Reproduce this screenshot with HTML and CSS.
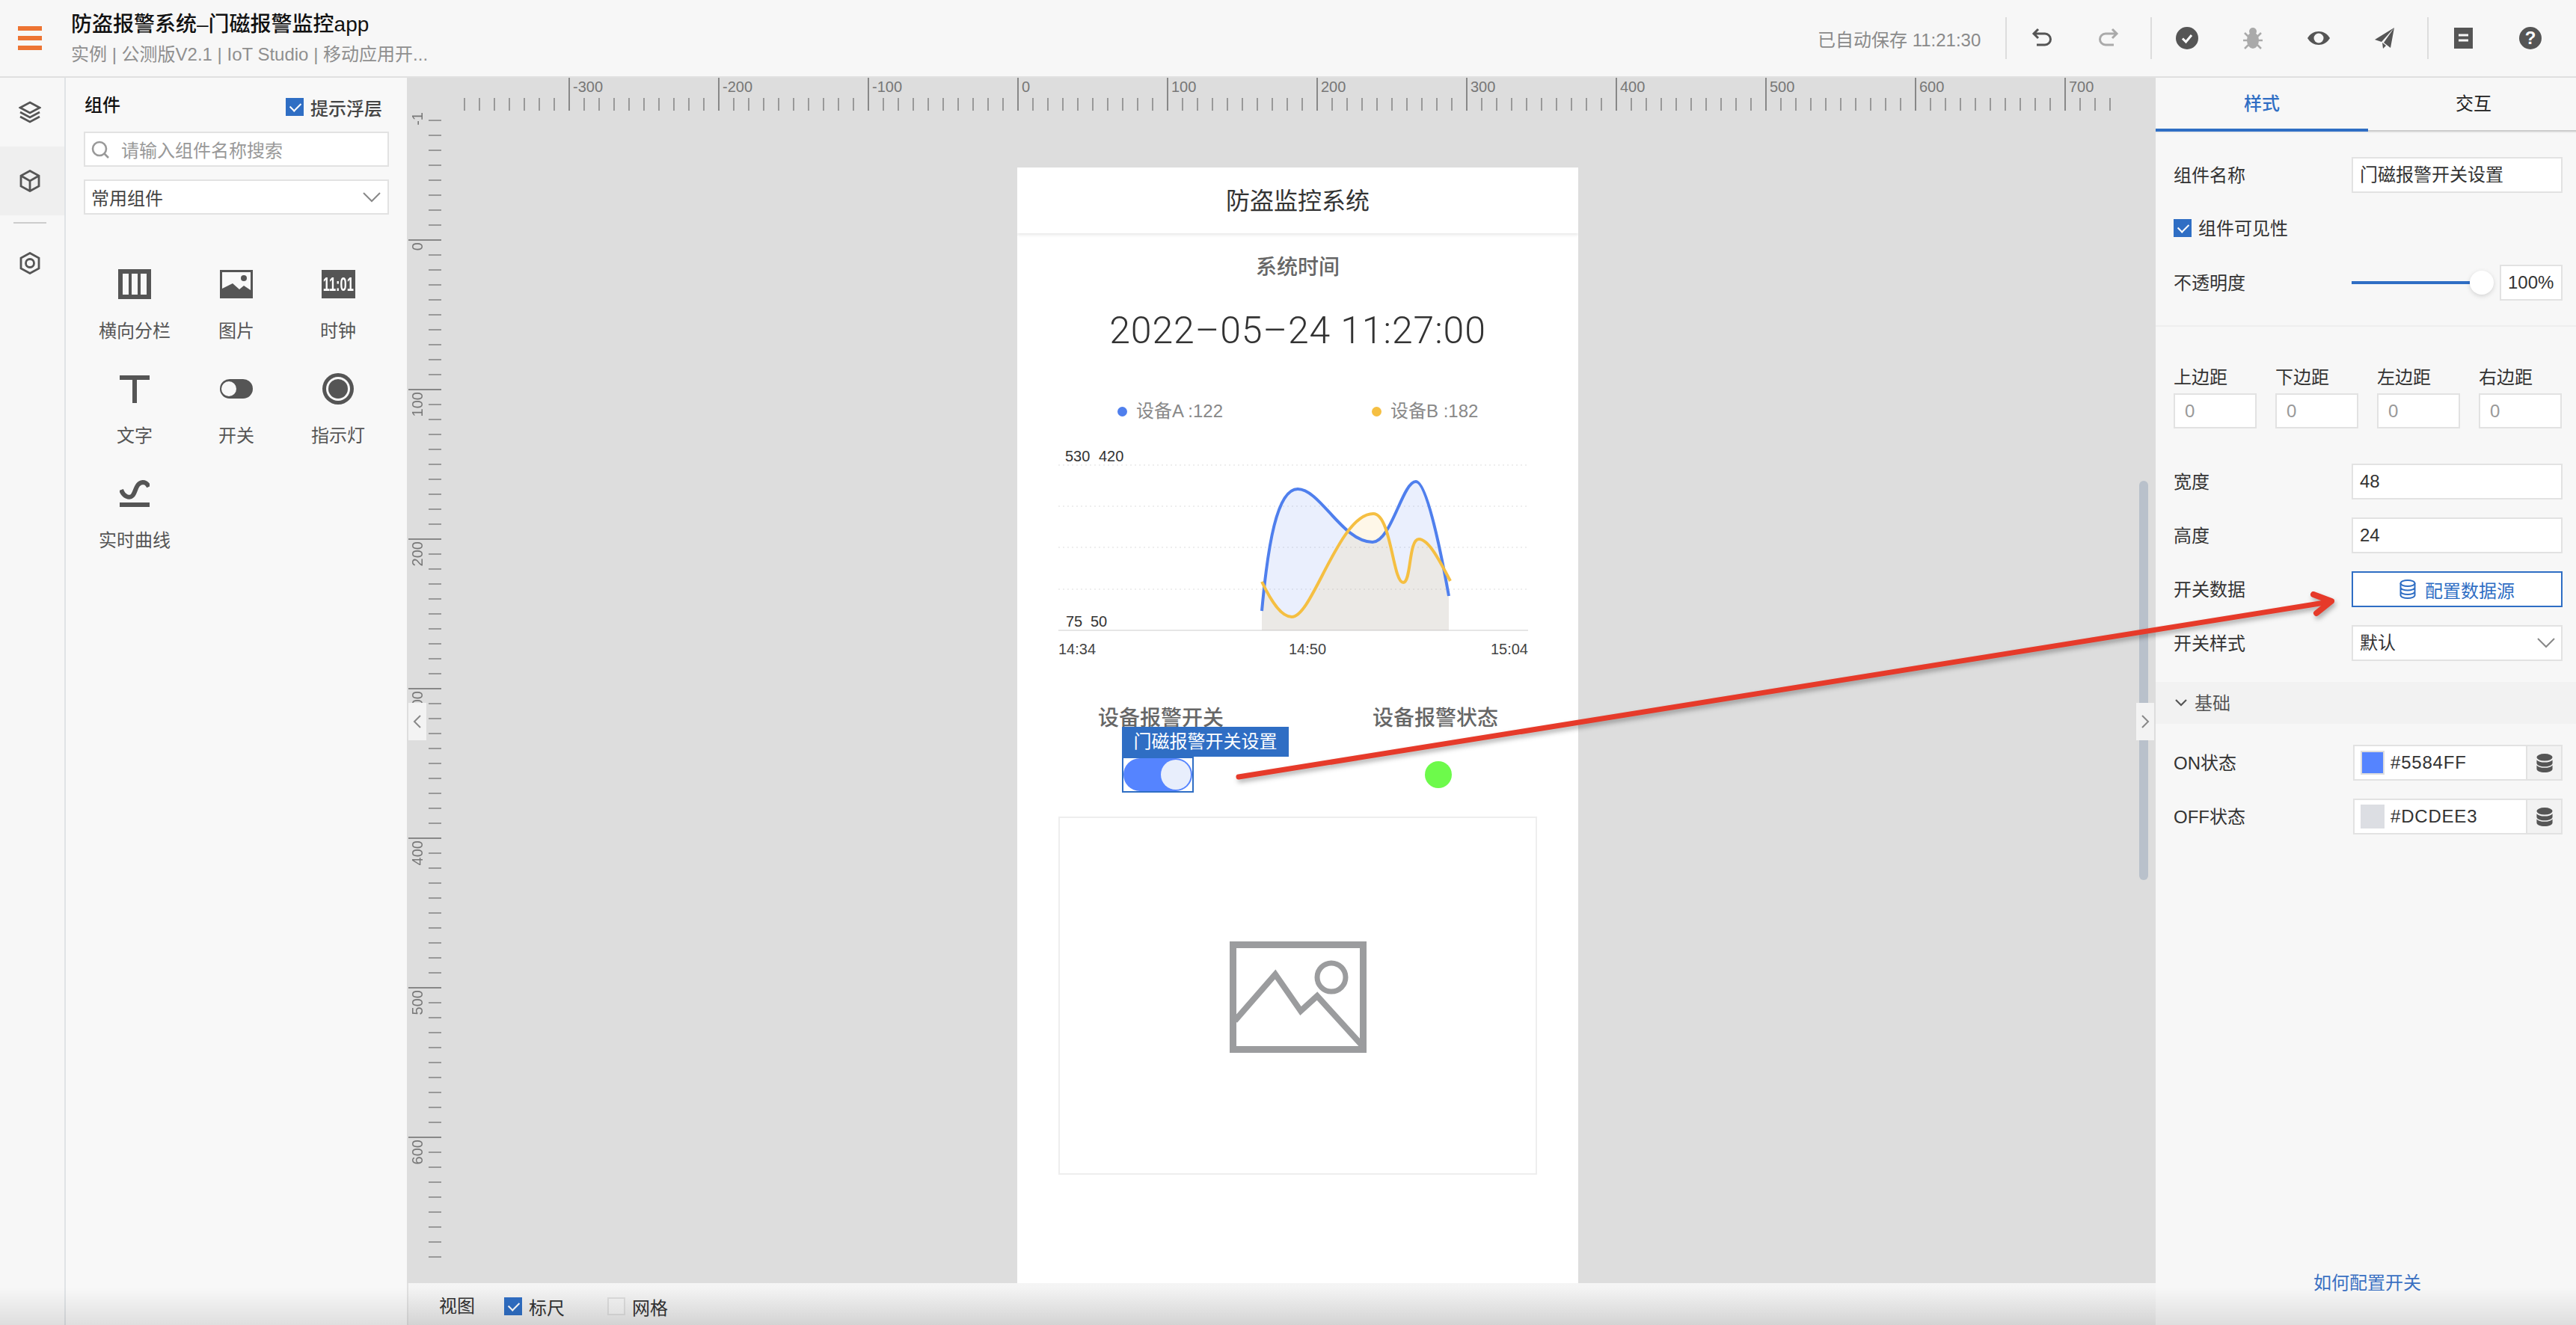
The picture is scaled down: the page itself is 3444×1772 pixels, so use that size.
FILE: index.html
```html
<!doctype html>
<html lang="zh-CN">
<head>
  <meta charset="utf-8">
  <title>防盗报警系统-门磁报警监控app</title>
  <link rel="stylesheet" href="styles.css">
</head>
<body>
<div class="app">
  <header class="topbar">
    <div class="burger"><span></span><span></span><span></span></div>
    <div class="project">
      <div class="project-name">防盗报警系统–门磁报警监控app</div>
      <div class="project-path">实例 | 公测版V2.1 | IoT Studio | 移动应用开...</div>
    </div>
    <div class="saved">已自动保存 11:21:30</div>
    <div class="tool-group tools-history">
      <svg class="tool" viewBox="0 0 30 30"><path d="M11 3 L5 9 L11 15 M5 9 H20 a7.500 7.500 0 0 1 0 15 H9" fill="none" stroke="#555" stroke-width="3"/></svg>
      <svg class="tool" viewBox="0 0 30 30"><path d="M19 3 L25 9 L19 15 M25 9 H10 a7.500 7.500 0 0 0 0 15 H21" fill="none" stroke="#aaa" stroke-width="3"/></svg>
    </div>
    <div class="tool-group tools-run">
      <svg class="tool" viewBox="0 0 30 30"><circle cx="15" cy="15" r="15" fill="#555"/><path d="M9 15.500 L13.500 20 L21 11" fill="none" stroke="#fff" stroke-width="3"/></svg>
      <svg class="tool" viewBox="0 0 30 30"><g fill="#aaa"><ellipse cx="15" cy="18" rx="8" ry="11"/><circle cx="15" cy="6" r="5"/></g><path d="M4 8 L9 13 M26 8 L21 13 M2 18 H8 M28 18 H22 M4 29 L9 24 M26 29 L21 24" stroke="#aaa" stroke-width="2.500"/></svg>
      <svg class="tool" viewBox="0 0 30 30"><path d="M0 15 C7 3 23 3 30 15 C23 27 7 27 0 15Z" fill="#555"/><circle cx="15" cy="15" r="6.500" fill="#f7f7f7"/></svg>
      <svg class="tool" viewBox="0 0 30 30"><path d="M28 1 L2 17 L11 20 Z M28 1 L14 21 L23 28 Z M12 21 L13 29 L17 25 Z" fill="#555"/></svg>
    </div>
    <div class="tool-group tools-help">
      <svg class="tool" viewBox="0 0 30 30"><rect x="3" y="1" width="25" height="28" fill="#555"/><path d="M9 11 H22 M9 18 H22" stroke="#f7f7f7" stroke-width="3"/></svg>
      <svg class="tool" viewBox="0 0 30 30"><circle cx="15" cy="15" r="15" fill="#555"/><text x="15" y="23" class="help-mark">?</text></svg>
    </div>
  </header>

  <div class="workspace">
    <nav class="rail">
      <div class="rail-item">
        <svg viewBox="0 0 30 30" class="rail-icon"><path d="M15 2 L28 9 L15 16 L2 9 Z M2 15 L15 22 L28 15 M2 21 L15 28 L28 21" fill="none" stroke="#555" stroke-width="2.600"/></svg>
      </div>
      <div class="rail-item rail-item-active">
        <svg viewBox="0 0 30 30" class="rail-icon"><path d="M15 1.500 L27 8 V22 L15 28.500 L3 22 V8 Z M3 8 L15 15 L27 8 M15 15 V28" fill="none" stroke="#555" stroke-width="2.800"/></svg>
      </div>
      <div class="rail-divider"></div>
      <div class="rail-item">
        <svg viewBox="0 0 30 30" class="rail-icon"><path d="M15 1.500 L27 8 V22 L15 28.500 L3 22 V8 Z" fill="none" stroke="#555" stroke-width="2.800"/><circle cx="15" cy="15" r="5.500" fill="none" stroke="#555" stroke-width="2.800"/></svg>
      </div>
    </nav>

    <aside class="library">
      <div class="library-head">
        <h2 class="library-title">组件</h2>
        <label class="hint-toggle"><span class="check"></span>提示浮层</label>
      </div>
      <div class="search">
        <svg viewBox="0 0 24 24" class="search-icon"><circle cx="11" cy="11" r="9" fill="none" stroke="#999" stroke-width="2.600"/><path d="M17 17 L23 23" stroke="#999" stroke-width="2.600"/></svg>
        <span>请输入组件名称搜索</span>
      </div>
      <div class="picker">
        <span>常用组件</span>
        <svg viewBox="0 0 24 14" class="chevron-down"><path d="M1 1 L12 12 L23 1" fill="none" stroke="#888" stroke-width="2"/></svg>
      </div>
      <div class="comp-grid">
        <div class="comp">
          <div class="comp-icon"><svg width="44" height="40" viewBox="0 0 44 40"><rect width="44" height="40" fill="#555"/><path d="M6 6h8v28H6z M18 6h8v28h-8z M30 6h8v28h-8z" fill="#f8f8f8"/></svg></div>
          <div class="comp-name">横向分栏</div>
        </div>
        <div class="comp">
          <div class="comp-icon"><svg width="44" height="38" viewBox="0 0 44 38"><rect width="44" height="38" fill="#555"/><path d="M3 3h38v24l-9-6-6 5-9-8L3 25z" fill="#f8f8f8"/><circle cx="32" cy="11" r="4" fill="#555"/></svg></div>
          <div class="comp-name">图片</div>
        </div>
        <div class="comp">
          <div class="comp-icon"><div class="clock-face"><span>11:01</span></div></div>
          <div class="comp-name">时钟</div>
        </div>
        <div class="comp">
          <div class="comp-icon"><svg width="40" height="37" viewBox="0 0 40 37"><path d="M0 0h40v6H23v31h-6V6H0z" fill="#555"/></svg></div>
          <div class="comp-name">文字</div>
        </div>
        <div class="comp">
          <div class="comp-icon"><svg width="44" height="26" viewBox="0 0 44 26"><rect width="44" height="26" rx="13" fill="#555"/><circle cx="12" cy="13" r="10" fill="#f8f8f8"/></svg></div>
          <div class="comp-name">开关</div>
        </div>
        <div class="comp">
          <div class="comp-icon"><svg width="42" height="42" viewBox="0 0 42 42"><circle cx="21" cy="21" r="21" fill="#555"/><circle cx="21" cy="21" r="16" fill="#f8f8f8"/><circle cx="21" cy="21" r="13" fill="#555"/></svg></div>
          <div class="comp-name">指示灯</div>
        </div>
        <div class="comp">
          <div class="comp-icon"><svg width="40" height="36" viewBox="0 0 40 36"><path d="M2 13 C5 22 13 25 17 21 C22 16 21 4 31 3 C35 3 37 5 39 9" fill="none" stroke="#555" stroke-width="6"/><rect y="30" width="40" height="6" fill="#555"/></svg></div>
          <div class="comp-name">实时曲线</div>
        </div>
      </div>
    </aside>

    <main class="canvas">
      <div class="ruler-top">
        <div class="tick-cell">-300</div>
        <div class="tick-cell">-200</div>
        <div class="tick-cell">-100</div>
        <div class="tick-cell">0</div>
        <div class="tick-cell">100</div>
        <div class="tick-cell">200</div>
        <div class="tick-cell">300</div>
        <div class="tick-cell">400</div>
        <div class="tick-cell">500</div>
        <div class="tick-cell">600</div>
        <div class="tick-cell tick-cell-last">700</div>
      </div>
      <div class="canvas-body">
        <div class="ruler-left">
          <span class="ruler-minus">-1</span>
          <div class="tick-row"><span>0</span></div>
          <div class="tick-row"><span>100</span></div>
          <div class="tick-row"><span>200</span></div>
          <div class="tick-row"><span>300</span></div>
          <div class="tick-row"><span>400</span></div>
          <div class="tick-row"><span>500</span></div>
          <div class="tick-row"><span>600</span></div>
        </div>
        <div class="phone">
          <div class="phone-head">防盗监控系统</div>
          <div class="time-label">系统时间</div>
          <div class="time-value">2022–05–24 11:27:00</div>
          <div class="legend">
            <div class="legend-item"><i class="dot dot-a"></i>设备A :122</div>
            <div class="legend-item"><i class="dot dot-b"></i>设备B :182</div>
          </div>
          <svg class="chart" viewBox="0 0 628 280" width="628" height="280">
            <g stroke="#eee" stroke-width="2" stroke-dasharray="2 4">
              <path d="M0 22H628 M0 77H628 M0 132H628 M0 188H628"/>
            </g>
            <path d="M0 243H628" stroke="#e6e6e6" stroke-width="2"/>
            <path d="M272 243 V217 C280 130 292 54 320 54 C350 54 380 125 420 125 C445 125 460 44 478 44 C492 44 510 130 522 197 V243 Z" fill="#4f7fed" fill-opacity=".12"/>
            <path d="M272 243 V178 C285 205 298 225 312 225 C340 225 375 87 421 87 C445 87 447 179 461 179 C472 179 468 121 482 121 C495 121 510 150 522 177 V243 Z" fill="#f5bf42" fill-opacity=".12"/>
            <path d="M272 217 C280 130 292 54 320 54 C350 54 380 125 420 125 C445 125 460 44 478 44 C492 44 510 130 522 197" fill="none" stroke="#4f7fed" stroke-width="4"/>
            <path d="M272 178 C285 205 298 225 312 225 C340 225 375 87 421 87 C445 87 447 179 461 179 C472 179 468 121 482 121 C495 121 510 150 524 177" fill="none" stroke="#f5bf42" stroke-width="4"/>
            <g class="chart-text">
              <text x="9" y="17">530</text>
              <text x="54" y="17">420</text>
              <text x="10" y="238">75</text>
              <text x="43" y="238">50</text>
            </g>
            <g class="chart-time">
              <text x="0" y="275">14:34</text>
              <text x="333" y="275" text-anchor="middle">14:50</text>
              <text x="628" y="275" text-anchor="end">15:04</text>
            </g>
          </svg>
          <div class="alarm-titles">
            <div>设备报警开关</div>
            <div>设备报警状态</div>
          </div>
          <div class="alarm-controls">
            <div class="selected-switch">
              <div class="selected-tag">门磁报警开关设置</div>
              <div class="switch-track"><i class="switch-knob"></i></div>
            </div>
            <div class="status-lamp"></div>
          </div>
          <div class="image-box">
            <svg width="183" height="149" viewBox="0 0 183 149">
              <rect x="4.500" y="4.500" width="174" height="140" fill="none" stroke="#9b9c9e" stroke-width="9"/>
              <circle cx="136" cy="48" r="19" fill="none" stroke="#9b9c9e" stroke-width="7"/>
              <path d="M7 106 L61 44 L95 93 L117 73 L176 138" fill="none" stroke="#9b9c9e" stroke-width="8"/>
            </svg>
          </div>
        </div>
      </div>
      <div class="viewbar">
        <span class="viewbar-title">视图</span>
        <label class="view-option"><span class="check"></span>标尺</label>
        <label class="view-option"><span class="check check-off"></span>网格</label>
      </div>
      <div class="scroll-thumb"></div>
      <div class="collapse collapse-left"><svg viewBox="0 0 12 20" width="12" height="20"><path d="M10 2 L2 10 L10 18" fill="none" stroke="#888" stroke-width="2"/></svg></div>
      <div class="collapse collapse-right"><svg viewBox="0 0 12 20" width="12" height="20"><path d="M2 2 L10 10 L2 18" fill="none" stroke="#888" stroke-width="2"/></svg></div>
    </main>

    <aside class="props">
      <div class="tabs">
        <div class="tab tab-active">样式</div>
        <div class="tab">交互</div>
      </div>
      <div class="props-group">
        <div class="prop-row">
          <span>组件名称</span>
          <div class="field">门磁报警开关设置</div>
        </div>
        <label class="visible-toggle"><span class="check"></span><span class="visible-text">组件可见性</span></label>
        <div class="prop-row">
          <span>不透明度</span>
          <div class="opacity">
            <div class="slider"><i class="slider-knob"></i></div>
            <div class="field opacity-value">100%</div>
          </div>
        </div>
      </div>
      <div class="margins">
        <div class="margin-item"><span>上边距</span><div class="field field-muted">0</div></div>
        <div class="margin-item"><span>下边距</span><div class="field field-muted">0</div></div>
        <div class="margin-item"><span>左边距</span><div class="field field-muted">0</div></div>
        <div class="margin-item"><span>右边距</span><div class="field field-muted">0</div></div>
      </div>
      <div class="props-list">
        <div class="prop-row"><span>宽度</span><div class="field">48</div></div>
        <div class="prop-row"><span>高度</span><div class="field">24</div></div>
        <div class="prop-row">
          <span>开关数据</span>
          <div class="source-btn">
            <svg viewBox="0 0 22 26" width="22" height="26"><g fill="none" stroke="#2f6ec4" stroke-width="2"><ellipse cx="11" cy="5" rx="9.500" ry="4"/><path d="M1.500 5V21c0 2.200 4.200 4 9.500 4s9.500-1.800 9.500-4V5 M1.500 10.500c0 2.200 4.200 4 9.500 4s9.500-1.800 9.500-4 M1.500 16c0 2.200 4.200 4 9.500 4s9.500-1.800 9.500-4"/></g></svg>
            配置数据源
          </div>
        </div>
        <div class="prop-row">
          <span>开关样式</span>
          <div class="field field-select">默认
            <svg viewBox="0 0 24 14" class="chevron-down"><path d="M1 1 L12 12 L23 1" fill="none" stroke="#888" stroke-width="2"/></svg>
          </div>
        </div>
      </div>
      <div class="section-head">
        <svg viewBox="0 0 16 10" width="16" height="10"><path d="M1 1 L8 8 L15 1" fill="none" stroke="#555" stroke-width="2.200"/></svg>
        <span class="section-name">基础</span>
      </div>
      <div class="props-list">
        <div class="prop-row">
          <span>ON状态</span>
          <div class="color-field">
            <i class="swatch swatch-on"></i>
            <span class="color-code">#5584FF</span>
            <div class="color-db"><svg viewBox="0 0 22 26" width="22" height="25"><g fill="#555"><ellipse cx="11" cy="5" rx="11" ry="5"/><path d="M0 8.500c2 2.500 6 3.500 11 3.500s9-1 11-3.500V13c0 2.800-5 5-11 5S0 15.800 0 13z"/><path d="M0 16c2 2.500 6 3.500 11 3.500s9-1 11-3.500v5c0 2.800-5 5-11 5S0 23.800 0 21z"/></g></svg></div>
          </div>
        </div>
        <div class="prop-row">
          <span>OFF状态</span>
          <div class="color-field">
            <i class="swatch swatch-off"></i>
            <span class="color-code">#DCDEE3</span>
            <div class="color-db"><svg viewBox="0 0 22 26" width="22" height="25"><g fill="#555"><ellipse cx="11" cy="5" rx="11" ry="5"/><path d="M0 8.500c2 2.500 6 3.500 11 3.500s9-1 11-3.500V13c0 2.800-5 5-11 5S0 15.800 0 13z"/><path d="M0 16c2 2.500 6 3.500 11 3.500s9-1 11-3.500v5c0 2.800-5 5-11 5S0 23.800 0 21z"/></g></svg></div>
          </div>
        </div>
      </div>
      <a class="help-link">如何配置开关</a>
    </aside>
  </div>

  <!-- annotation drawn on top of the screenshot -->
  <svg class="annotation" viewBox="0 0 3444 1772" width="3444" height="1772">
    <g fill="none" stroke="#e63a2a" stroke-linecap="round" stroke-linejoin="round">
      <path d="M1656 1039 L3114 805" stroke-width="7"/>
      <path d="M3093 795 L3117 804 L3097 820" stroke-width="8"/>
    </g>
  </svg>
  <div class="screen-shade"></div>
</div>
</body>
</html>
```

FILE: styles.css
```css
* {
  box-sizing: border-box;
}

html, body {
  margin: 0;
  padding: 0;
}

body {
  font-family: "Liberation Sans", "Noto Sans CJK SC", sans-serif;
  font-size: 24px;
  color: #333;
}

.app {
  position: relative;
  width: 3444px;
  height: 1772px;
  overflow: hidden;
  background: #f7f7f7;
}

/* top bar */
.topbar {
  display: flex;
  align-items: center;
  height: 104px;
  background: #f7f7f7;
  border-bottom: 2px solid #e0e0e0;
  padding-left: 24px;
}

.burger {
  width: 32px;
  margin-right: 39px;
}

.burger span {
  display: block;
  height: 6px;
  margin: 7px 0;
  background: #ed7433;
}

.project {
  flex: 1;
}

.project-name {
  font-size: 28px;
  font-weight: 500;
  line-height: 40px;
  color: #111;
}

.project-path {
  margin-top: 4px;
  font-size: 24px;
  line-height: 32px;
  color: #8f8f8f;
}

.saved {
  width: 251px;
  color: #8a8a8a;
}

.tool-group {
  display: flex;
  align-items: center;
  height: 56px;
  border-left: 2px solid #ddd;
}

.tool {
  width: 30px;
  height: 30px;
  flex: none;
}

.tools-history {
  width: 194px;
  padding-left: 31px;
  gap: 61px;
}

.tools-run {
  width: 370px;
  padding-left: 32px;
  gap: 58px;
}

.tools-help {
  width: 199px;
  padding-left: 31px;
  gap: 60px;
}

.help-mark {
  font-size: 24px;
  font-weight: 700;
  text-anchor: middle;
  fill: #fff;
}

/* main columns */
.workspace {
  display: grid;
  grid-template-columns: 88px 456px 2338px 562px;
  height: 1668px;
}

.rail {
  background: #f7f7f7;
  border-right: 2px solid #e0e3e6;
}

.rail-item {
  display: flex;
  align-items: center;
  height: 92px;
  padding-left: 25px;
}

.rail-item-active {
  background: #efefef;
}

.rail-icon {
  width: 30px;
  height: 30px;
}

.rail-divider {
  height: 2px;
  margin: 9px 24px 7px 18px;
  background: #ccc;
}

/* component library */
.library {
  background: #f8f8f8;
  padding: 0 24px;
}

.library-head {
  display: flex;
  align-items: center;
  justify-content: space-between;
  height: 72px;
  padding: 0 9px 0 1px;
}

.library-title {
  margin: 0 0 4px;
  font-size: 24px;
  font-weight: 500;
  color: #111;
}

.hint-toggle {
  display: flex;
  align-items: center;
  gap: 9px;
  margin-top: 6px;
  font-weight: 500;
  color: #444;
}

.check {
  position: relative;
  display: block;
  flex: none;
  width: 24px;
  height: 24px;
  background: #2f6ec4;
}

.check::after {
  content: "";
  position: absolute;
  left: 6px;
  top: 6px;
  width: 12px;
  height: 7px;
  border-left: 2px solid #fff;
  border-bottom: 2px solid #fff;
  transform: rotate(-45deg);
}

.check-off {
  background: #f3f3f3;
  border: 2px solid #ddd;
}

.check-off::after {
  display: none;
}

.search,
.picker {
  display: flex;
  align-items: center;
  height: 47px;
  background: #fff;
  border: 2px solid #e2e2e2;
}

.search {
  padding-left: 8px;
  gap: 16px;
  color: #999;
}

.search-icon {
  width: 24px;
  height: 24px;
}

.picker {
  justify-content: space-between;
  margin-top: 17px;
  padding: 0 9px 0 8px;
  color: #444;
}

.chevron-down {
  width: 24px;
  height: 14px;
}

.comp-grid {
  display: grid;
  grid-template-columns: repeat(3, 136px);
  grid-auto-rows: 140px;
  margin-top: 63px;
}

.comp {
  text-align: center;
}

.comp-icon {
  display: flex;
  align-items: center;
  justify-content: center;
  height: 60px;
  margin-bottom: 15px;
}

.comp-name {
  line-height: 36px;
  color: #555;
}

.clock-face {
  display: flex;
  justify-content: center;
  width: 45px;
  height: 38px;
  background: #555;
  color: #fff;
  font-size: 25px;
  font-weight: 700;
  line-height: 38px;
}

.clock-face span {
  flex: none;
  transform: scaleX(.66);
}

/* canvas */
.canvas {
  position: relative;
  display: grid;
  grid-template-rows: 44px 1fr 56px;
  background: #ddd;
  overflow: hidden;
}

.ruler-top {
  display: flex;
  padding-left: 76px;
  background-image: repeating-linear-gradient(90deg, #999 0 2px, transparent 2px 20px);
  background-size: 2220px 17px;
  background-position: 76px bottom;
  background-repeat: no-repeat;
}

.ruler-top .tick-cell:first-child {
  margin-left: 140px;
}

.tick-cell {
  flex: none;
  width: 200px;
  height: 44px;
  padding-left: 4px;
  border-left: 2px solid #888;
  font-size: 20px;
  line-height: 24px;
  color: #777;
}

.tick-cell-last {
  width: 80px;
}

.canvas-body {
  display: flex;
  min-height: 0;
}

.ruler-left {
  position: relative;
  flex: none;
  width: 44px;
  height: 1552px;
  margin-left: 2px;
  padding-top: 172px;
  overflow: hidden;
  background-image: repeating-linear-gradient(180deg, #999 0 2px, transparent 2px 20px);
  background-size: 17px 1540px;
  background-position: right 12px;
  background-repeat: no-repeat;
}

.ruler-minus,
.tick-row span {
  display: block;
  width: 24px;
  writing-mode: vertical-rl;
  transform: rotate(180deg);
  font-size: 20px;
  line-height: 24px;
  color: #777;
}

.ruler-minus {
  position: absolute;
  left: 0;
  top: 2px;
}

.tick-row {
  height: 200px;
  padding-top: 2px;
  border-top: 2px solid #888;
}

.phone {
  flex: none;
  width: 750px;
  height: 1492px;
  margin: 76px 0 0 770px;
  background: #fff;
  overflow: hidden;
}

.phone-head {
  height: 88px;
  font-size: 32px;
  line-height: 90px;
  text-align: center;
  box-shadow: 0 2px 4px rgba(0, 0, 0, .1);
}

.time-label {
  margin-top: 26px;
  font-size: 28px;
  font-weight: 500;
  line-height: 40px;
  text-align: center;
  color: #666;
}

.time-value {
  margin-top: 34px;
  font-family: Roboto, "Liberation Sans", sans-serif;
  font-size: 50px;
  font-weight: 300;
  line-height: 60px;
  text-align: center;
  letter-spacing: .9px;
}

.legend {
  display: grid;
  grid-template-columns: 340px auto;
  margin-top: 60px;
  padding-left: 134px;
  line-height: 36px;
  color: #888;
}

.legend-item {
  display: flex;
  align-items: center;
  gap: 12px;
}

.dot {
  width: 13px;
  height: 13px;
  border-radius: 50%;
}

.dot-a {
  background: #4f7fed;
}

.dot-b {
  background: #f5bf42;
}

.chart {
  display: block;
  margin: 32px 0 0 55px;
}

.chart-text text {
  font-size: 20px;
  fill: #333;
}

.chart-time text {
  font-size: 20px;
  fill: #444;
}

.alarm-titles {
  display: flex;
  gap: 199px;
  margin-top: 60px;
  padding-left: 108px;
  font-size: 28px;
  font-weight: 500;
  line-height: 42px;
  height: 40px;
  color: #666;
}

.alarm-controls {
  display: flex;
  align-items: center;
  margin-top: 32px;
  padding-left: 140px;
}

.selected-switch {
  position: relative;
  width: 96px;
  height: 48px;
  border: 2px solid #2f6ec4;
}

.switch-track {
  display: flex;
  align-items: center;
  justify-content: flex-end;
  height: 44px;
  padding-right: 2px;
  border-radius: 22px;
  background: #5584ff;
}

.switch-knob {
  width: 40px;
  height: 40px;
  border-radius: 50%;
  background: #e8eefc;
}

.selected-tag {
  position: absolute;
  left: -2px;
  bottom: 100%;
  width: 223px;
  height: 40px;
  margin-bottom: 2px;
  background: #2f6ec4;
  color: #fff;
  line-height: 40px;
  text-align: center;
}

.status-lamp {
  width: 36px;
  height: 36px;
  margin-left: 309px;
  border-radius: 50%;
  background: #6dfa4b;
}

.image-box {
  display: flex;
  align-items: center;
  justify-content: center;
  width: 640px;
  height: 479px;
  margin: 32px 0 0 55px;
  padding-top: 4px;
  border: 2px solid #eee;
}

.viewbar {
  display: flex;
  align-items: center;
  padding-left: 41px;
  background: linear-gradient(#f5f5f5, #ebebeb);
  border-left: 2px solid #e0e0e0;
  color: #333;
}

.viewbar-title {
  margin-right: 39px;
}

.view-option {
  display: flex;
  align-items: center;
  gap: 9px;
  width: 138px;
  margin-top: 6px;
}

.scroll-thumb {
  position: absolute;
  left: 2316px;
  top: 539px;
  width: 12px;
  height: 534px;
  border-radius: 6px;
  background: #b9c1cb;
}

.collapse {
  position: absolute;
  top: 836px;
  display: flex;
  align-items: center;
  justify-content: center;
  width: 24px;
  height: 50px;
  background: #f3f3f3;
}

.collapse-left {
  left: 2px;
}

.collapse-right {
  left: 2312px;
}

/* properties */
.props {
  display: flex;
  flex-direction: column;
  background: #f7f7f7;
}

.tabs {
  display: grid;
  grid-template-columns: 284px 1fr;
  height: 74px;
  border-bottom: 2px solid #ececec;
}

.tab {
  height: 72px;
  padding-left: 4px;
  line-height: 70px;
  text-align: center;
  color: #222;
  border-bottom: 2px solid #ccc;
}

.tab-active {
  padding-left: 0;
  font-weight: 500;
  color: #2f6ec4;
  border-bottom: 4px solid #2f6ec4;
}

.props-group {
  padding: 32px 18px 33px 24px;
  border-bottom: 2px solid #eee;
}

.prop-row {
  display: grid;
  grid-template-columns: 238px 1fr;
  align-items: center;
  height: 48px;
}

.prop-row > span {
  margin-top: -3px;
}

.field {
  height: 48px;
  padding-left: 9px;
  background: #fff;
  border: 2px solid #e2e2e2;
  line-height: 44px;
  color: #333;
}

.field-muted {
  height: 47px;
  padding-left: 13px;
  color: #999;
}

.visible-toggle {
  display: flex;
  align-items: center;
  gap: 9px;
  height: 24px;
  margin: 35px 0 37px;
}

.visible-text {
  margin-top: -3px;
}

.opacity {
  display: flex;
  align-items: center;
}

.slider {
  position: relative;
  width: 190px;
  height: 4px;
  margin-right: 8px;
  background: linear-gradient(90deg, #2f6ec4 158px, transparent 158px);
}

.slider-knob {
  position: absolute;
  right: 0;
  top: -14px;
  width: 32px;
  height: 32px;
  border-radius: 50%;
  background: #fff;
  box-shadow: 0 2px 6px rgba(0, 0, 0, .15);
}

.opacity-value {
  flex: 1;
}

.margins {
  display: grid;
  grid-template-columns: repeat(4, 111px);
  gap: 25px;
  padding: 50px 18px 0 24px;
}

.margin-item span {
  display: block;
  margin-bottom: 3px;
  line-height: 36px;
}

.props-list {
  display: grid;
  gap: 24px;
  padding: 0 18px 0 24px;
  margin-top: 47px;
}

.source-btn {
  display: flex;
  align-items: center;
  justify-content: center;
  gap: 12px;
  height: 48px;
  background: #fff;
  border: 2px solid #2f6ec4;
  color: #2f6ec4;
}

.field-select {
  display: flex;
  align-items: center;
  justify-content: space-between;
  padding-right: 8px;
}

.section-head {
  display: flex;
  align-items: center;
  gap: 10px;
  height: 56px;
  margin-top: 28px;
  padding-left: 26px;
  background: #f2f2f2;
  color: #555;
}

.section-name {
  margin-top: -3px;
}

.section-head + .props-list {
  margin-top: 28px;
}

.color-field {
  display: flex;
  align-items: center;
  height: 48px;
  margin-left: 2px;
  padding-left: 8px;
  background: #fff;
  border: 2px solid #e2e2e2;
}

.swatch {
  flex: none;
  width: 32px;
  height: 32px;
  border: 2px solid #ddd;
}

.swatch-on {
  background: #5584ff;
}

.swatch-off {
  background: #dcdee3;
  border-color: #dcdee3;
}

.color-code {
  flex: 1;
  padding-left: 8px;
  letter-spacing: .8px;
}

.color-db {
  display: flex;
  align-items: center;
  justify-content: center;
  width: 47px;
  height: 44px;
  background: #f2f2f2;
  border-left: 2px solid #e2e2e2;
}

.help-link {
  margin-top: auto;
  padding: 0 0 38px 4px;
  line-height: 36px;
  text-align: center;
  color: #3a70c2;
}

/* overlays */
.annotation {
  position: absolute;
  left: 0;
  top: 0;
  pointer-events: none;
  filter: drop-shadow(2px 4px 3px rgba(0, 0, 0, .3));
}

.screen-shade {
  position: absolute;
  left: 0;
  right: 0;
  bottom: 0;
  height: 50px;
  background: linear-gradient(rgba(0, 0, 0, 0), rgba(0, 0, 0, .1));
  pointer-events: none;
}
```
